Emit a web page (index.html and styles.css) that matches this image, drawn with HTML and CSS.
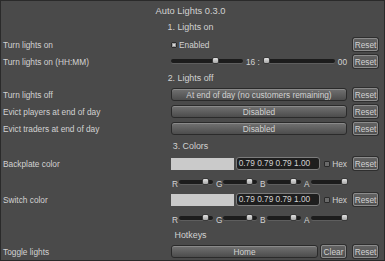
FILE: index.html
```html
<!DOCTYPE html>
<html lang="en">
<head>
  <meta charset="UTF-8" />
  <title>Auto Lights 0.3.0</title>
  <link rel="stylesheet" href="styles.css">
</head>
<body>

  <div class="window">
    <div class="title">Auto Lights 0.3.0</div>

    <!-- Lights on -->
    <div class="section">1. Lights on</div>
    <div class="row">
      <span class="label">Turn lights on</span>
      <div class="control">
        <label class="check"><span class="box on"></span>Enabled</label>
      </div>
      <button class="reset">Reset</button>
    </div>
    <div class="row">
      <span class="label">Turn lights on (HH:MM)</span>
      <div class="control time">
        <div class="slider"><span class="knob" style="left: 59%"></span></div>
        <span class="num">16 :</span>
        <div class="slider"><span class="knob" style="left: 2%"></span></div>
        <span class="num">00</span>
      </div>
      <button class="reset">Reset</button>
    </div>

    <!-- Lights off -->
    <div class="section short">2. Lights off</div>
    <div class="row">
      <span class="label">Turn lights off</span>
      <div class="control"><button class="wide">At end of day (no customers remaining)</button></div>
      <button class="reset">Reset</button>
    </div>
    <div class="row">
      <span class="label">Evict players at end of day</span>
      <div class="control"><button class="wide">Disabled</button></div>
      <button class="reset">Reset</button>
    </div>
    <div class="row">
      <span class="label">Evict traders at end of day</span>
      <div class="control"><button class="wide">Disabled</button></div>
      <button class="reset">Reset</button>
    </div>

    <!-- Colors -->
    <div class="section tall">3. Colors</div>
    <div class="row">
      <span class="label">Backplate color</span>
      <div class="control color">
        <span class="swatch"></span>
        <span class="field">0.79 0.79 0.79 1.00</span>
        <label class="check"><span class="box"></span>Hex</label>
      </div>
      <button class="reset">Reset</button>
    </div>
    <div class="row channels">
      <span class="label"></span>
      <div class="control rgba">
        <span class="ch">R</span><div class="slider"><span class="knob" style="left: 70%"></span></div>
        <span class="ch">G</span><div class="slider"><span class="knob" style="left: 70%"></span></div>
        <span class="ch">B</span><div class="slider"><span class="knob" style="left: 70%"></span></div>
        <span class="ch">A</span><div class="slider"><span class="knob" style="left: 90%"></span></div>
      </div>
    </div>
    <div class="row">
      <span class="label">Switch color</span>
      <div class="control color">
        <span class="swatch"></span>
        <span class="field">0.79 0.79 0.79 1.00</span>
        <label class="check"><span class="box"></span>Hex</label>
      </div>
      <button class="reset">Reset</button>
    </div>
    <div class="row channels">
      <span class="label"></span>
      <div class="control rgba">
        <span class="ch">R</span><div class="slider"><span class="knob" style="left: 70%"></span></div>
        <span class="ch">G</span><div class="slider"><span class="knob" style="left: 70%"></span></div>
        <span class="ch">B</span><div class="slider"><span class="knob" style="left: 70%"></span></div>
        <span class="ch">A</span><div class="slider"><span class="knob" style="left: 90%"></span></div>
      </div>
    </div>

    <!-- Hotkeys -->
    <div class="section">Hotkeys</div>
    <div class="row last">
      <span class="label">Toggle lights</span>
      <div class="control hotkey">
        <button class="wide">Home</button>
        <button class="small">Clear</button>
      </div>
      <button class="reset">Reset</button>
    </div>
  </div>

</body>
</html>
```

FILE: styles.css
```css
body {
  margin: 0;
  padding: 0;
  background-color: #2c2c2c;
  font-family: 'Liberation Sans', Arial, sans-serif;
}

.window {
  box-sizing: border-box;
  width: 385px;
  height: 261px;
  padding: 2px 6px 0 2px;
  border: 1px solid #2a2a2a;
  background-color: #4a4a4a;
  color: #d2d2d2;
  font-size: 8.3px;
}

.title {
  height: 16px;
  line-height: 16px;
  text-align: center;
  font-size: 9.3px;
}

.section {
  height: 17px;
  line-height: 17px;
  text-align: center;
  font-size: 8.9px;
}

.section.short {
  height: 16px;
  line-height: 16px;
}

.section.tall {
  height: 18px;
  line-height: 18px;
}

.row {
  display: grid;
  grid-template-columns: 168px 176px 1fr;
  align-items: center;
  height: 17px;
}

.row.channels {
  height: 19px;
}

.row.last {
  height: 15px;
}

.label {
  white-space: nowrap;
}

.control {
  display: flex;
  align-items: center;
}

.reset {
  justify-self: end;
  width: 25px;
}

button {
  box-sizing: border-box;
  height: 13px;
  padding: 0;
  font-family: inherit;
  font-size: 8.3px;
  color: #d2d2d2;
  border: 1px solid #2a2a2a;
  border-radius: 3px;
  background: linear-gradient(#727272, #4c4c4c);
  box-shadow: inset 0 1px 0 #8a8a8a;
}

.reset,
.small {
  border: 1px solid #8c8c8c;
  border-radius: 2px;
  background: linear-gradient(#626262, #505050);
  box-shadow: 0 0 0 1px #2e2e2e;
}

.wide {
  width: 100%;
}

/* checkbox */
.check {
  display: flex;
  align-items: center;
  gap: 2px;
}

.box {
  box-sizing: border-box;
  width: 6px;
  height: 6px;
  border: 1px solid #2a2a2a;
  border-radius: 1px;
  background-color: #6a6a6a;
}

.box.on {
  background-color: #d6d6d6;
  box-shadow: inset 0 0 0 1px #9a9a9a;
}

/* sliders */
.slider {
  position: relative;
  height: 4px;
  border-radius: 2px;
  background-color: #1c1c1c;
  box-shadow: 0 1px 0 #5e5e5e;
}

.knob {
  position: absolute;
  top: -2px;
  width: 7px;
  height: 7px;
  margin-left: -1px;
  box-sizing: border-box;
  border: 1px solid #3a3a3a;
  border-radius: 2px;
  background: linear-gradient(#e2e2e2, #a6a6a6);
}

.time .slider {
  flex: 1;
  margin-top: -2px;
}

.time .num {
  margin: 0 3px 0 3px;
}

.time .num:last-child {
  margin-right: 0;
}

/* colors */
.color {
  gap: 2px;
}

.swatch {
  width: 63px;
  height: 12px;
  background-color: #cacaca;
  margin-top: 1px;
}

.field {
  box-sizing: border-box;
  width: 85px;
  height: 13px;
  line-height: 11px;
  padding-left: 2px;
  border: 1px solid #7c7c7c;
  border-radius: 3px;
  background-color: #1e1e1e;
  margin-right: 2px;
}

.rgba {
  gap: 0;
}

.rgba .ch {
  width: 8px;
  padding-left: 1px;
  margin-top: 5px;
  box-sizing: border-box;
}

.rgba .slider {
  width: 34px;
  margin-right: 2px;
}

.hotkey {
  gap: 3px;
}

.hotkey .wide {
  width: 147px;
}

.hotkey .small {
  width: 25px;
}
```
